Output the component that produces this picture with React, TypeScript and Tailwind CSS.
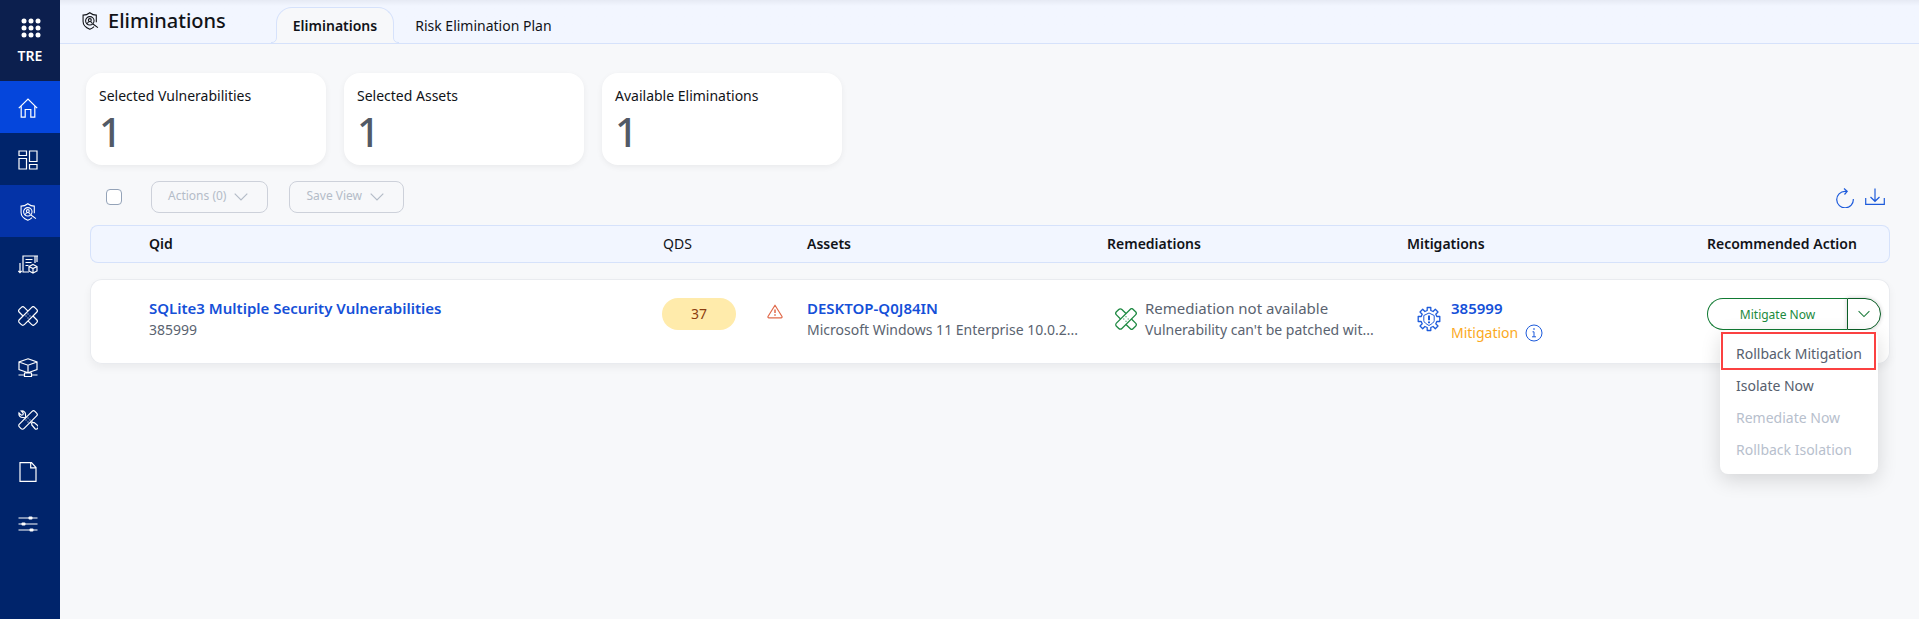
import type { ReactNode } from "react";

type IconProps = { className?: string };

function Svg({
	className = "",
	size = 20,
	children,
}: IconProps & { size?: number; children: ReactNode }) {
	return (
		<svg
			className={className}
			width={size}
			height={size}
			viewBox="0 0 20 20"
			fill="none"
			stroke="currentColor"
			strokeWidth="1.2"
			aria-hidden="true"
		>
			{children}
		</svg>
	);
}

const HomeIcon = () => (
	<Svg>
		<path d="M.8 10.2 10 1l9.200 9.200M3.200 8.200v11H7.200v-7.700h5.600v7.700h4v-11" />
	</Svg>
);

const DashboardIcon = () => (
	<Svg>
		<path d="M1 1h7.500v4.500H1zM1 8.500h7.500V19H1zM11.500 1H19v10.500h-7.500zM11.500 14.500H19V19h-7.500z" />
	</Svg>
);

const ShieldIcon = () => (
	<Svg size={18}>
		<path d="M17 11.500V3.500C14 3.500 12 2.500 9.800.8 7.600 2.500 5.500 3.500 2.300 3.500v7c0 4 3.500 7 7.500 8.700 1.900-.8 3.500-1.800 4.700-3" />
		<circle cx="9.800" cy="9.800" r="4.700" />
		<circle cx="9.800" cy="9" r="1.600" />
		<path d="M7 13c.4-1.800 1.400-2.400 2.800-2.400s2.400.6 2.800 2.400M13.300 13.300l5.500 4" />
	</Svg>
);

const ReportIcon = () => (
	<Svg>
		<path d="M11 18H5V2h12v7M2 9v9.500M.3 17l1.700 1.700L3.700 17M19 8V1.500M16.500 2H20M7.500 5.500h7M7.500 8.500h6M7.500 11.500h3" />
		<path d="m15 10.500 4 2v4.500l-4 2-4-2v-4.500zM11 12.500l4 2 4-2M15 14.500V19" />
	</Svg>
);

const PatchIcon = ({ size = 20 }: { size?: number }) => (
	<Svg size={size}>
		<rect x="-.8" y="6.500" width="21.600" height="7" rx="2" transform="rotate(-45 10 10)" />
		<path
			d="M6.500 6.500H1.200a2 2 0 0 0-2 2v3a2 2 0 0 0 2 2h5.300M13.500 6.500h5.300a2 2 0 0 1 2 2v3a2 2 0 0 1-2 2h-5.300"
			transform="rotate(45 10 10)"
		/>
		<path d="M9.500 8h1M9.500 12h1M7.500 10h1M11.500 10h1" strokeWidth="1" />
	</Svg>
);

const BoxNetworkIcon = () => (
	<Svg>
		<path d="M10 .8 19 4v7.500l-9 3.200-9-3.200V4zM1 4l9 3.200L19 4M10 7.200V15M6.500 15h7v3.500h-7zM.5 17h6M13.500 17h6" />
	</Svg>
);

const ToolsIcon = () => (
	<Svg>
		<rect x="-1" y="6.800" width="22" height="6.400" rx="2" transform="rotate(-45 10 10)" />
		<path d="M7.800 7.700 7.500 5c.2-2.600-1.600-4.300-4.300-4l2.100 2.200-.4 1.600-1.700.4L1 3C.5 5.800 2.300 7.600 5 7.500l2.700.3M12.500 12.200l1.300 1.500v1.300l3 3.500a2 2 0 0 0 2.900-2.900l-3.500-3h-1.300l-1.300-1.300" />
		<path d="M9.500 8h1M9.500 12h1M7.500 10h1M11.500 10h1" strokeWidth="1" />
	</Svg>
);

const FileIcon = () => (
	<Svg>
		<path d="M2 .7h11.500L18 5.500v13.800H2zM12.700.7v5.100H18" />
	</Svg>
);

const SlidersIcon = () => (
	<Svg>
		<path d="M.5 4h19M.5 10h19M.5 16h19" />
		<g fill="currentColor" stroke="none">
			<rect x="10.500" y="2.500" width="4" height="3" rx="1" />
			<rect x="3.500" y="8.500" width="4" height="3" rx="1" />
			<rect x="11.500" y="14.500" width="4" height="3" rx="1" />
		</g>
	</Svg>
);

const AppsIcon = () => (
	<Svg>
		<g fill="currentColor" stroke="none">
			{[3, 10, 17].map((y) =>
				[3, 10, 17].map((x) => <circle key={`${x}-${y}`} cx={x} cy={y} r="2.500" />),
			)}
		</g>
	</Svg>
);

const GearIcon = () => (
	<svg width="26" height="26" viewBox="0 0 26 26" fill="none" stroke="currentColor" strokeWidth="1.300" aria-hidden="true">
		<path d="M11.200 1.500h3.600v3l2.300 1 2.200-2.200 2.700 2.700-2.200 2.200 1 2.300h3v5h-3l-1 2.300 2.200 2.200-2.700 2.700-2.200-2.200-2.300 1v3h-3.600v-3l-2.300-1L6.700 22.700 4 20l2.200-2.200-1-2.300h-3v-5h3l1-2.300L4 6l2.700-2.700 2.200 2.200 2.300-1z" strokeLinejoin="round" />
		<path d="m13 7 5.200 2.500v5.200c0 1.500-2.500 3.300-5.200 4.800-2.700-1.500-5.200-3.300-5.200-4.800V9.500z" strokeWidth="1" />
		<path d="M13 9.500v4.700M13 15.500v1.700" strokeWidth="2" />
	</svg>
);

const WarningIcon = () => (
	<svg width="16" height="15" viewBox="0 0 16 15" fill="none" stroke="currentColor" strokeWidth="1.200" strokeLinejoin="round" aria-hidden="true">
		<path d="M8 1.200 15 12.500a.9.900 0 0 1-.8 1.300H1.800a.9.900 0 0 1-.8-1.300z" />
		<path d="M8 5.500v3.500M8 10.300v1.500" strokeWidth="1.500" />
	</svg>
);

const InfoIcon = () => (
	<svg width="18" height="18" viewBox="0 0 18 18" fill="none" stroke="currentColor" aria-hidden="true">
		<circle cx="9" cy="9" r="8" />
		<path d="M9 4v2M7.500 7.800H9v5M7 12.800h4" />
	</svg>
);

const RefreshIcon = () => (
	<Svg>
		<path d="M18.300 11A8.300 8.300 0 1 1 10 3.300h2M9 .5l3.200 2.900L9.500 6.500" />
	</Svg>
);

const DownloadIcon = () => (
	<Svg>
		<path d="M10 .5v12.800M5.500 9l4.500 4.300L14.500 9M.7 10v6.300h18.600V10" />
	</Svg>
);

const Chevron = ({ width = 14 }: { width?: number }) => (
	<svg width={width} height="8" viewBox="0 0 14 8" fill="none" stroke="currentColor" strokeWidth="1.200" aria-hidden="true">
		<path d="M.7.700 7 7 13.300.7" />
	</svg>
);

/* curve that joins the tab's side to the header's bottom line */
const TabCorner = ({ className }: IconProps) => (
	<svg className={className} width="6" height="6" viewBox="0 0 6 6" aria-hidden="true">
		<path d="M0 0h6v6H0z" fill="#f7f8fa" />
		<path d="M0 0h5.500v1a4.500 4.500 0 0 1-4.500 4.500H0z" fill="#f2f6ff" />
		<path d="M0 5.500h1A4.500 4.500 0 0 0 5.500 1V0" fill="none" stroke="#d6e2fb" />
	</svg>
);

const navItems = [
	{ label: "Home", icon: <HomeIcon />, style: "bg-[#0546dc]" },
	{ label: "Dashboard", icon: <DashboardIcon />, style: "" },
	{ label: "Eliminations", icon: <ShieldIcon />, style: "bg-[#0433a7]" },
	{ label: "Reports", icon: <ReportIcon />, style: "" },
	{ label: "Patches", icon: <PatchIcon />, style: "" },
	{ label: "Assets", icon: <BoxNetworkIcon />, style: "" },
	{ label: "Tools", icon: <ToolsIcon />, style: "" },
	{ label: "Documents", icon: <FileIcon />, style: "" },
	{ label: "Configuration", icon: <SlidersIcon />, style: "" },
];

const stats = [
	{ label: "Selected Vulnerabilities", value: 1 },
	{ label: "Selected Assets", value: 1 },
	{ label: "Available Eliminations", value: 1 },
];

const menuItems = [
	{ label: "Rollback Mitigation", enabled: true, marked: true },
	{ label: "Isolate Now", enabled: true, marked: false },
	{ label: "Remediate Now", enabled: false, marked: false },
	{ label: "Rollback Isolation", enabled: false, marked: false },
];

function Sidebar() {
	return (
		<aside className="w-15 shrink-0 bg-[#00246b] text-white">
			<div className="flex h-[81px] flex-col items-center bg-[#0c1f4e] pt-[18px]">
				<button type="button" aria-label="Apps" className="ml-0.5">
					<AppsIcon />
				</button>
				<span className="mt-2 text-sm leading-5 font-semibold">TRE</span>
			</div>
			<nav>
				{navItems.map((item) => (
					<a
						key={item.label}
						href="#"
						aria-label={item.label}
						className={`flex h-13 items-center justify-center pt-0.5 pr-1 ${item.style}`}
					>
						{item.icon}
					</a>
				))}
			</nav>
		</aside>
	);
}

function Header() {
	return (
		<header className="flex h-11 items-end border-b border-[#d6e2fb] bg-[#f2f6ff] bg-linear-to-b from-[#e6eaf4] to-[#f2f6ff] to-[6px] pl-[21px]">
			<div className="flex h-full items-center gap-[9px] pb-0.5 text-[#111318]">
				<ShieldIcon />
				<h1 className="text-xl leading-7 font-medium">Eliminations</h1>
			</div>
			<nav className="ml-[50px] flex text-sm">
				<a
					href="#"
					className="relative -mb-px flex h-9 items-center rounded-t-2xl border border-b-0 border-[#d6e2fb] bg-[#f7f8fa] px-4 font-semibold text-[#111318]"
				>
					<TabCorner className="absolute bottom-0 -left-1.5" />
					Eliminations
					<TabCorner className="absolute -right-1.5 bottom-0 -scale-x-100" />
				</a>
				<a href="#" className="flex h-9 items-center px-[21px] pt-0.5 text-[#111318]">
					Risk Elimination Plan
				</a>
			</nav>
		</header>
	);
}

function StatCards() {
	return (
		<div className="-ml-1 flex gap-[18px]">
			{stats.map((stat) => (
				<div
					key={stat.label}
					className="h-[92px] w-60 rounded-2xl bg-white px-[13px] pt-[13px] shadow-[0_2px_6px_rgba(0,0,0,0.06)]"
				>
					<p className="text-sm leading-5 text-[#111318]">{stat.label}</p>
					<p className="text-[40px] leading-[52px] font-medium text-[#525a66]">{stat.value}</p>
				</div>
			))}
		</div>
	);
}

function Toolbar() {
	return (
		<div className="mt-4 flex items-center pr-[5px] pl-4">
			<input
				type="checkbox"
				aria-label="Select all"
				className="size-4 appearance-none rounded-[4px] border border-[#94a3b8] bg-white"
			/>
			<button
				type="button"
				disabled
				className="ml-[29px] flex h-8 items-center gap-2 rounded-lg border border-[#cdd1da] pr-[19px] pl-4 text-xs text-[#b4bcc8]"
			>
				<span className="pb-0.5">Actions (0)</span>
				<Chevron />
			</button>
			<button
				type="button"
				disabled
				className="ml-[21px] flex h-8 items-center gap-2 rounded-lg border border-[#cdd1da] pr-[19px] pl-4 text-xs text-[#b4bcc8]"
			>
				<span className="pb-0.5">Save View</span>
				<Chevron />
			</button>
			<div className="ml-auto flex gap-2.5 pt-0.5 text-[#1d5bdb]">
				<button type="button" aria-label="Refresh">
					<RefreshIcon />
				</button>
				<button type="button" aria-label="Download">
					<DownloadIcon />
				</button>
			</div>
		</div>
	);
}

function ActionButton() {
	return (
		<div className="relative mr-2 flex h-8">
			<button
				type="button"
				className="flex-1 rounded-l-full border border-r-0 border-[#117a33] bg-white pt-0.5 text-xs text-[#1b8a3d]"
			>
				Mitigate Now
			</button>
			<button
				type="button"
				aria-label="More actions"
				aria-expanded="true"
				className="flex w-[34px] items-center justify-center rounded-r-full border border-[#0b5f27] bg-white text-[#1b7a3a] shadow-[0_0_4px_rgba(0,0,0,0.2)]"
			>
				<Chevron width={12} />
			</button>
			<ul
				role="menu"
				className="absolute top-8 right-[3px] z-10 w-[158px] rounded-lg bg-white py-2 shadow-[0_6px_20px_rgba(0,0,0,0.14)]"
			>
				{menuItems.map((item) => (
					<li key={item.label} role="none" className="relative h-8">
						<button
							type="button"
							role="menuitem"
							disabled={!item.enabled}
							className="h-8 w-full pl-4 text-left text-sm whitespace-nowrap text-[#56606e] disabled:text-[#b7c0cd]"
						>
							{item.label}
						</button>
						{item.marked && (
							<span className="pointer-events-none absolute -top-1.5 right-0.5 bottom-0 left-px border-2 border-[#fb4141]" />
						)}
					</li>
				))}
			</ul>
		</div>
	);
}

function EliminationsTable() {
	const head =
		"h-[38px] border-y border-[#d6e2fb] bg-[#f2f6ff] p-0 text-left font-semibold first:rounded-l-lg first:border-l last:rounded-r-lg last:border-r";
	const cell =
		"h-[85px] border-y border-[#e9ebef] bg-white pt-[18px] align-top first:rounded-l-xl first:border-l last:rounded-r-xl last:border-r";
	const title = "block text-[15px] leading-5";
	const link = `${title} font-semibold text-[#1550d8]`;

	return (
		<table className="-mt-1 w-full table-fixed border-separate border-spacing-x-0 border-spacing-y-4 text-sm leading-6 text-[#5a6370]">
			<thead>
				<tr className="text-[#111318]">
					<td className={`${head} w-[59px]`} />
					<th className={head}>Qid</th>
					<th className={`${head} w-36`}>
						<span className="font-normal">QDS</span>
					</th>
					<th className={`${head} w-[300px]`}>Assets</th>
					<th className={`${head} w-[300px]`}>Remediations</th>
					<th className={`${head} w-[300px]`}>Mitigations</th>
					<th className={`${head} w-[183px]`}>Recommended Action</th>
				</tr>
			</thead>
			<tbody>
				<tr className="rounded-xl shadow-[0_4px_8px_rgba(0,0,0,0.05)]">
					<td className={cell} />
					<td className={cell}>
						<a href="#" className={link}>
							SQLite3 Multiple Security Vulnerabilities
						</a>
						<p>385999</p>
					</td>
					<td className={cell}>
						<div className="-ml-px flex items-center justify-between pr-6">
							<span className="flex h-8 w-[74px] items-center justify-center rounded-full bg-[#ffebab] text-[#8c3d10]">
								37
							</span>
							<span className="pb-1.5 text-[#e0694a]">
								<WarningIcon />
							</span>
						</div>
					</td>
					<td className={cell}>
						<a href="#" className={link}>
							DESKTOP-Q0J84IN
						</a>
						<p>Microsoft Windows 11 Enterprise 10.0.2...</p>
					</td>
					<td className={cell}>
						<div className="flex gap-2 pl-2">
							<span className="pt-2.5 text-[#1f8a43]">
								<PatchIcon size={22} />
							</span>
							<div>
								<p className={title}>Remediation not available</p>
								<p>Vulnerability can't be patched wit...</p>
							</div>
						</div>
					</td>
					<td className={cell}>
						<div className="flex gap-[9px] pl-[9px]">
							<span className="pt-2 text-[#1d5bdb]">
								<GearIcon />
							</span>
							<div>
								<a href="#" className={link}>
									385999
								</a>
								<p className="flex items-center gap-[7px] pt-[3px] text-[#fba91d]">
									Mitigation
									<button type="button" aria-label="Mitigation details" className="text-[#1d5bdb]">
										<InfoIcon />
									</button>
								</p>
							</div>
						</div>
					</td>
					<td className={cell}>
						<ActionButton />
					</td>
				</tr>
			</tbody>
		</table>
	);
}

export default function App() {
	return (
		<div className="flex min-h-screen bg-[#f7f8fa] font-['Noto_Sans',sans-serif]">
			<Sidebar />
			<div className="min-w-0 flex-1">
				<Header />
				<main className="pt-[29px] pr-[29px] pl-[30px]">
					<StatCards />
					<Toolbar />
					<EliminationsTable />
				</main>
			</div>
		</div>
	);
}
